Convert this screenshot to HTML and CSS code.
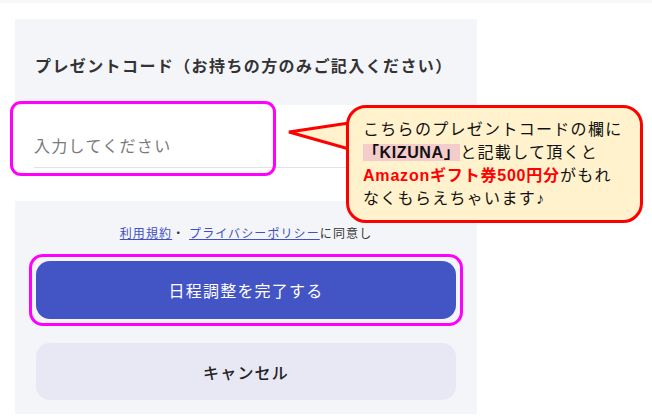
FILE: index.html
```html
<!DOCTYPE html>
<html lang="ja">

<head>
    <meta charset="UTF-8">
    <meta name="viewport" content="width=device-width, initial-scale=1.0">
    <title>日程調整</title>
    <link rel="stylesheet" href="styles.css">
</head>

<body>
    <div class="top-strip"></div>

    <div class="panel">
        <div class="code-head">
            <h2>プレゼントコード（お持ちの方のみご記入ください）</h2>
        </div>

        <div class="code-input">
            <div class="field">
                <input type="text" placeholder="入力してください">
                <div class="mark mark-input"></div>
            </div>
        </div>

        <div class="actions">
            <p class="agree">
                <a href="#">利用規約</a>・ <a href="#">プライバシーポリシー</a>に同意し
            </p>
            <div class="btn-wrap">
                <button class="btn-primary">日程調整を完了する</button>
                <div class="mark mark-button"></div>
            </div>
            <button class="btn-cancel">キャンセル</button>
        </div>
    </div>

    <!-- 吹き出し -->
    <svg class="bubble-tail" width="64" height="36" viewBox="0 0 64 36">
        <polygon points="2,14 62,5 62,31" fill="#fff2cc" stroke="#ff0000" stroke-width="3" stroke-linejoin="miter" />
    </svg>
    <div class="bubble">
        こちらのプレゼントコードの欄に<br>
        <span class="code">「KIZUNA」</span>と記載して頂くと<br>
        <span class="gift">Amazonギフト券500円分</span>がもれ<br>
        なくもらえちゃいます♪
    </div>
</body>

</html>
```

FILE: styles.css
```css
body {
    font-family: "Noto Sans CJK JP", "Noto Sans", sans-serif;
    margin: 0;
    padding: 0;
    background-color: #fff;
    color: #333;
    position: relative;
    height: 419px;
    overflow: hidden;
}

.top-strip {
    height: 3px;
    background-color: #f6f7f9;
}

.panel {
    width: 462px;
    margin: 16px 0 0 15px;
    background-color: #f4f5f9;
}

.code-head {
    padding: 33px 0 27px 20px;
}

.code-head h2 {
    margin: 0;
    font-size: 16px;
    line-height: 26px;
    font-weight: bold;
    letter-spacing: 1.4px;
    color: #333;
}

.code-input {
    background-color: #fff;
    padding: 22px 0 33px 19px;
}

.field {
    position: relative;
}

.field input {
    display: block;
    width: 100%;
    box-sizing: border-box;
    border: none;
    border-bottom: 1px solid #e3e3e6;
    padding: 6px 0 10px;
    font-family: inherit;
    font-size: 16px;
    letter-spacing: 1.3px;
    line-height: 24px;
    color: #333;
    outline: none;
    background: transparent;
}

.field input::placeholder {
    color: #7a7a7a;
}

.mark {
    position: absolute;
    border: 3px solid #ff00ff;
    border-radius: 11px;
    box-sizing: border-box;
    pointer-events: none;
}

.mark-input {
    left: -24px;
    top: -26px;
    width: 266px;
    height: 75px;
}

.actions {
    padding: 22px 21px 14px;
}

.agree {
    margin: 0 0 18px;
    text-align: center;
    font-size: 12px;
    line-height: 20px;
    letter-spacing: 1.1px;
    color: #333;
}

.agree a {
    color: #4150c2;
}

.btn-wrap {
    position: relative;
    margin-bottom: 24px;
}

button {
    display: block;
    width: 100%;
    border: none;
    border-radius: 14px;
    font-family: inherit;
    font-size: 16px;
    letter-spacing: 1.2px;
    cursor: pointer;
}

.btn-primary {
    height: 58px;
    background-color: #4354c4;
    color: #fff;
}

.mark-button {
    left: -7px;
    top: -7px;
    right: -7px;
    bottom: -7px;
    border-radius: 14px;
}

.btn-cancel {
    height: 57px;
    background-color: #e7e8f4;
    color: #222;
    font-weight: 500;
}

.bubble-tail {
    position: absolute;
    left: 287px;
    top: 118px;
    z-index: 1;
}

.bubble {
    position: absolute;
    left: 346px;
    top: 105px;
    width: 297px;
    height: 118px;
    box-sizing: border-box;
    padding: 10px 0 0 14px;
    background-color: #fff2cc;
    border: 3px solid #ff0000;
    border-radius: 20px;
    font-family: "Liberation Sans", "Noto Sans CJK JP", sans-serif;
    font-size: 16px;
    letter-spacing: 1.3px;
    line-height: 23px;
    color: #111;
    z-index: 2;
}

.bubble .code {
    background-color: #f4cccc;
    font-weight: bold;
    letter-spacing: 0.6px;
}

.bubble .gift {
    color: #ff0000;
    font-weight: bold;
    letter-spacing: 0.8px;
}
```
